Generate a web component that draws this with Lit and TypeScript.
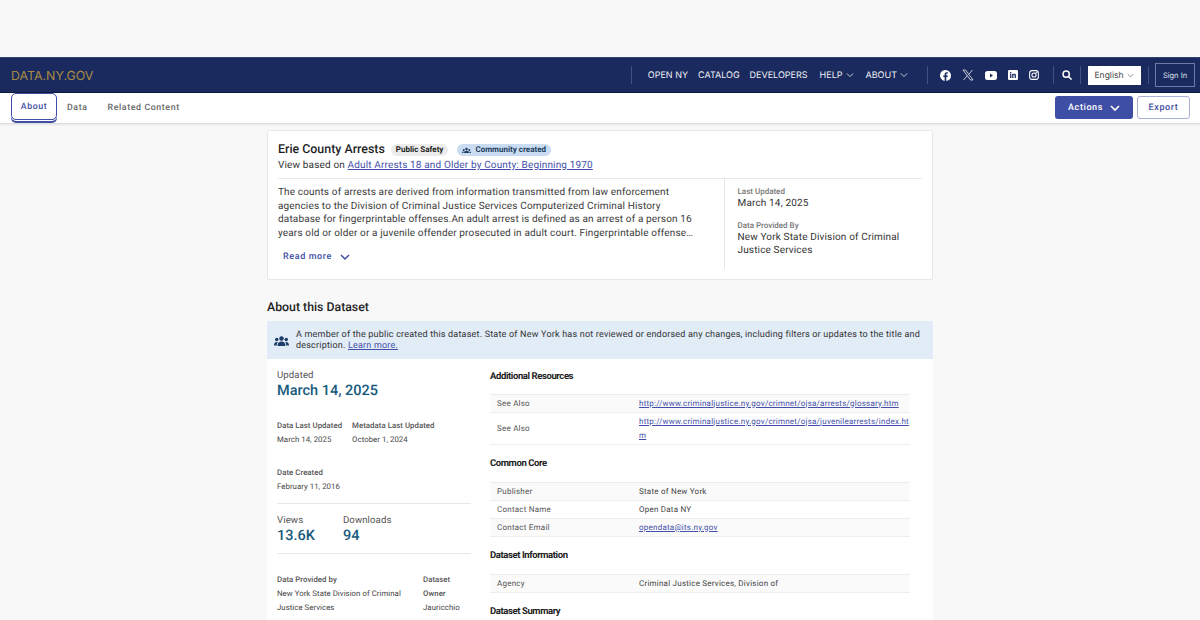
import { LitElement, html, css } from "lit";
import { customElement } from "lit/decorators.js";

const chev = (w = 9, c = "currentColor", sw = 1) => html`<svg width=${w} height=${w} viewBox="0 0 10 10" fill="none" stroke=${c} stroke-width=${sw}><path d="M1 3l4 4 4-4"/></svg>`;

const row = (k: string, v: unknown, cls = "") => html`<div class="row ${cls}"><div class="k">${k}</div><div class="v">${v}</div></div>`;

@customElement("app-root")
export class AppRoot extends LitElement {
  static styles = css`
    :host { display: block; height: 620px; overflow: hidden; background: #f8f8f8; font-family: Roboto, sans-serif; color: #2c2c2c; text-rendering: geometricPrecision; }
    * { box-sizing: border-box; }
    a { color: #4450a8; }
    .spacer { height: 57px; background: #f8f8f8; }
    .nav { height: 36px; background: #1a2a5e; border-top: 1px solid #31406f; border-bottom: 1px solid #101a40; display: flex; align-items: center; font-family: Inter, sans-serif; color: #f0f1f5; }
    .logo { margin-left: 11px; color: #a98a42; font-size: 12.4px; flex: 1; }
    .sep { width: 1px; height: 18px; background: #43507f; }
    .links { display: flex; align-items: center; font-size: 9px; margin: 0 19px 0 16px; gap: 10px; }
    .links span { display: inline-flex; align-items: center; gap: 3px; white-space: nowrap; }
    .links .dd { margin-left: 2px; }
    .social { display: flex; align-items: center; gap: 11px; margin: 0 14px 0 12px; }
    .social svg { display: block; }
    .search { margin: 0 8px; display: block; }
    .lang { width: 53px; height: 19px; padding-top: 1px; background: #fff; color: #444; font-size: 8.5px; display: flex; align-items: center; justify-content: center; gap: 4px; margin: 0 7px; }
    .signin { width: 40px; height: 24px; border: 1px solid #6d7ba6; font-size: 7.5px; display: flex; align-items: center; justify-content: center; margin: 0 5px 0 6px; color: #dfe2ec; }
    .tabs { height: 31px; background: #fff; border-bottom: 1px solid #dedede; box-shadow: 0 1px 2px rgba(0,0,0,.08); display: flex; align-items: flex-start; padding: 0 10px 0 11px; font-size: 8.8px; letter-spacing: 0.6px; font-weight: 500; color: #666; }
    .tab { height: 29px; padding: 1px 10px 0; display: flex; align-items: center; }
    .tab.on { width: 46px; height: 27px; padding: 1px 0 0; justify-content: center; color: #3f4ea5; border: 1px solid #3f4ea5; border-radius: 5px; box-shadow: 0 1px 0 #fff, 0 3px 0 #3f4ea5; }
    .acts { margin-left: auto; display: flex; gap: 4px; margin-top: 3px; font-size: 9px; }
    .btn { height: 23px; padding-top: 1px; border-radius: 3px; display: flex; align-items: center; justify-content: center; font-weight: 500; }
    .btn.pri { width: 78px; background: #3f4ea5; color: #fff; gap: 7px; }
    .btn.sec { width: 53px; background: #fff; border: 1px solid #a9b0d6; color: #3f4ea5; }
    .main { width: 666px; margin: 6px auto 0; }
    .card { background: #fff; border: 1px solid #e8e8e8; border-radius: 2px; height: 150px; padding: 10px; }
    .title { display: flex; align-items: center; height: 17px; }
    h1 { font-size: 12.4px; font-weight: 500; margin: 0; color: #1f1f1f; }
    .pill { height: 12px; border-radius: 6px; font-size: 8px; font-weight: 700; display: flex; align-items: center; padding: 0 5px; }
    .pill.g { background: #ececec; color: #222; margin-left: 6px; }
    .pill.b { background: #c9dcf2; color: #1c3c60; margin-left: 9px; gap: 4px; }
    .sub { font-size: 10px; line-height: 14px; color: #333; letter-spacing: .15px; margin-top: 1px; }
    .body { display: flex; margin-top: 5px; border-top: 1px solid #e8e8e8; height: 91px; }
    .desc { width: 447px; padding-top: 7px; border-right: 1px solid #e6e6e6; }
    .desc p { margin: 0; width: 418px; font-size: 10px; line-height: 13.7px; color: #3a3a3a; letter-spacing: .15px; }
    .more { display: flex; align-items: center; gap: 8px; margin: 10px 0 0 5px; font-size: 9px; font-weight: 500; color: #3f4ea5; letter-spacing: .6px; line-height: 13px; }
    .meta { padding: 7px 0 0 12.5px; flex: 1; }
    .lbl { font-size: 8px; font-weight: 500; color: #777; line-height: 11px; }
    .lbl.gap { margin-top: 10px; }
    .val { font-size: 10px; line-height: 13px; color: #333; letter-spacing: .15px; }
    h2 { font-size: 12.3px; font-weight: 500; margin: 20px 0 5px; line-height: 16px; color: #1f1f1f; }
    .notice { background: #e1ecf7; height: 38px; display: flex; align-items: center; padding: 2px 11px 0 7px; gap: 7px; font-size: 9px; line-height: 11.5px; letter-spacing: .2px; color: #333; }
    .notice svg { flex: none; }
    .panel { background: #fff; display: flex; height: 262px; }
    .left { width: 223px; padding: 11px 19px 0 10px; flex: none; }
    .right { flex: 1; padding: 0 23px 0 0; }
    .t { font-size: 9.6px; line-height: 12px; color: #555; letter-spacing: .1px; }
    .big { font-size: 14.5px; font-weight: 500; color: #175a7c; line-height: 18px; }
    .dates { display: flex; gap: 10px; margin-top: 19px; }
    .small { font-size: 7.8px; line-height: 14px; color: #444; letter-spacing: .05px; }
    .small b { font-weight: 500; color: #555; display: block; }
    .created { margin-top: 19px; }
    hr { border: 0; border-top: 1px solid #e8e8e8; margin: 0; }
    .l1 { margin-top: 9px; }
    .stats { display: flex; gap: 28px; padding: 11px 0 8px; }
    .prov { display: flex; justify-content: space-between; margin-top: 19px; }
    .prov .a { width: 130px; }
    .prov .b { width: 45px; margin-right: 3px; }
    h3 { font-size: 9.5px; font-weight: 700; margin: 0; color: #222; letter-spacing: -0.4px; line-height: 12px; }
    .head1 { margin-top: 12px; margin-bottom: 11px; }
    .head { margin-top: 13px; margin-bottom: 12px; }
    .row { display: flex; align-items: center; min-height: 18px; border-bottom: 1px solid #eee; font-size: 8px; letter-spacing: .23px; color: #555; }
    .row.top { border-top: 1px solid #eee; min-height: 19px; }
    .row:nth-child(odd) { background: #fafafa; }
    .k { width: 149px; padding-left: 7px; flex: none; }
    .v { flex: 1; line-height: 14px; word-break: break-all; color: #444; }
    .row.tall { height: 32px; }
  `;

  render() {
    return html`
      <div class="spacer"></div>
      <div class="nav">
        <div class="logo">DATA.NY.GOV</div>
        <div class="sep"></div>
        <div class="links">
          <span>OPEN NY</span><span>CATALOG</span><span>DEVELOPERS</span>
          <span class="dd">HELP ${chev(8)}</span><span class="dd">ABOUT ${chev(8)}</span>
        </div>
        <div class="sep"></div>
        <div class="social">
          <svg width="11" height="11" viewBox="0 0 24 24" fill="#fff"><path d="M24 12a12 12 0 1 0-13.9 11.9v-8.4H7.1V12h3V9.400c0-3 1.800-4.700 4.500-4.700 1.300 0 2.700.2 2.700.2v3h-1.500c-1.500 0-2 .9-2 1.900V12h3.400l-.5 3.500h-2.900v8.400A12 12 0 0 0 24 12z"/></svg>
          <svg width="12" height="12" viewBox="0 0 24 24" fill="none" stroke="#fff" stroke-width="1.500"><path d="M2 2h5l15 20h-5zM21 2L13.500 10.500M10.500 13.500L3 22"/></svg>
          <svg width="12" height="9" viewBox="0 0 24 18"><rect width="24" height="18" rx="5" fill="#fff"/><path d="M10 5l6 4-6 4z" fill="#1a2a5e"/></svg>
          <svg width="10" height="10" viewBox="0 0 24 24"><rect width="24" height="24" rx="3" fill="#fff"/><path d="M5 9h3v10H5zM5 5h3v3H5zM10 9h3v1.500c1-1.800 6-2.300 6 2.500v6h-3v-5.500c0-2.500-3-2.300-3 0V19h-3z" fill="#1a2a5e"/></svg>
          <svg width="10" height="10" viewBox="0 0 24 24" fill="none" stroke="#fff" stroke-width="2.500"><rect x="1.500" y="1.500" width="21" height="21" rx="6"/><circle cx="12" cy="12" r="5"/><circle cx="18" cy="6" r=".8" fill="#fff"/></svg>
        </div>
        <div class="sep"></div>
        <svg class="search" width="10" height="10" viewBox="0 0 24 24" fill="none" stroke="#fff" stroke-width="3.500"><circle cx="10" cy="10" r="7.500"/><path d="M15.500 15.500L23 23"/></svg>
        <div class="sep"></div>
        <div class="lang">English ${chev(7, "#666")}</div>
        <div class="sep"></div>
        <div class="signin">Sign In</div>
      </div>
      <div class="tabs">
        <div class="tab on">About</div>
        <div class="tab">Data</div>
        <div class="tab">Related Content</div>
        <div class="acts">
          <div class="btn pri">Actions ${chev(10, "#fff", 1.6)}</div>
          <div class="btn sec">Export</div>
        </div>
      </div>
      <div class="main">
        <div class="card">
          <div class="title">
            <h1>Erie County Arrests</h1>
            <div class="pill g">Public Safety</div>
            <div class="pill b">
              <svg width="9" height="6" viewBox="0 0 18 12" fill="#1c3c60"><circle cx="9" cy="4" r="2.500"/><circle cx="3.500" cy="6" r="2"/><circle cx="14.500" cy="6" r="2"/><path d="M4 12c0-3 2-4.500 5-4.500s5 1.500 5 4.500zM0 12c0-2 1-3 3-3v3zM18 12c0-2-1-3-3-3v3z"/></svg>
              Community created
            </div>
          </div>
          <div class="sub">View based on <a href="#">Adult Arrests 18 and Older by County: Beginning 1970</a></div>
          <div class="body">
            <div class="desc">
              <p>The counts of arrests are derived from information transmitted from law enforcement agencies to the Division of Criminal Justice Services Computerized Criminal History database for fingerprintable offenses.An adult arrest is defined as an arrest of a person 16 years old or older or a juvenile offender prosecuted in adult court. Fingerprintable offense…</p>
              <div class="more">Read more ${chev(10, "#3f4ea5", 1.5)}</div>
            </div>
            <div class="meta">
              <div class="lbl">Last Updated</div>
              <div class="val">March 14, 2025</div>
              <div class="lbl gap">Data Provided By</div>
              <div class="val">New York State Division of Criminal<br />Justice Services</div>
            </div>
          </div>
        </div>
        <h2>About this Dataset</h2>
        <div class="notice">
          <svg width="15" height="10" viewBox="0 0 30 20" fill="#1c3c68"><circle cx="15" cy="5" r="4.500"/><circle cx="5.500" cy="7" r="3.500"/><circle cx="24.500" cy="7" r="3.500"/><path d="M7 20c0-6 3-9 8-9s8 3 8 9zM0 19c0-4 2-7 5.500-7 1 0 1.500.2 2 .5C6 14.500 5.500 16.500 5.500 19zM30 19c0-4-2-7-5.500-7-1 0-1.500.2-2 .5 1.500 2 2 4 2 6.500z"/></svg>
          <div>A member of the public created this dataset. State of New York has not reviewed or endorsed any changes, including filters or updates to the title and description. <a href="#">Learn more.</a></div>
        </div>
        <div class="panel">
          <div class="left">
            <div class="t">Updated</div>
            <div class="big">March 14, 2025</div>
            <div class="dates">
              <div class="small"><b>Data Last Updated</b>March 14, 2025</div>
              <div class="small"><b>Metadata Last Updated</b>October 1, 2024</div>
            </div>
            <div class="small created"><b>Date Created</b>February 11, 2016</div>
            <hr class="l1" />
            <div class="stats">
              <div><div class="t">Views</div><div class="big">13.6K</div></div>
              <div><div class="t">Downloads</div><div class="big">94</div></div>
            </div>
            <hr />
            <div class="prov">
              <div class="small a"><b>Data Provided by</b>New York State Division of Criminal Justice Services</div>
              <div class="small b"><b>Dataset Owner</b>Jauricchio</div>
            </div>
          </div>
          <div class="right">
            <h3 class="head1">Additional Resources</h3>
            <div class="tbl">
              ${row("See Also", html`<a href="#">http://www.criminaljustice.ny.gov/crimnet/ojsa/arrests/glossary.htm</a>`, "top")}
              ${row("See Also", html`<a href="#">http://www.criminaljustice.ny.gov/crimnet/ojsa/juvenilearrests/index.htm</a>`, "tall")}
            </div>
            <h3 class="head">Common Core</h3>
            <div class="tbl">
              ${row("Publisher", "State of New York", "top")}
              ${row("Contact Name", "Open Data NY")}
              ${row("Contact Email", html`<a href="#">opendata@its.ny.gov</a>`)}
            </div>
            <h3 class="head">Dataset Information</h3>
            <div class="tbl">${row("Agency", "Criminal Justice Services, Division of", "top")}</div>
            <h3 class="head">Dataset Summary</h3>
          </div>
        </div>
      </div>
    `;
  }
}
